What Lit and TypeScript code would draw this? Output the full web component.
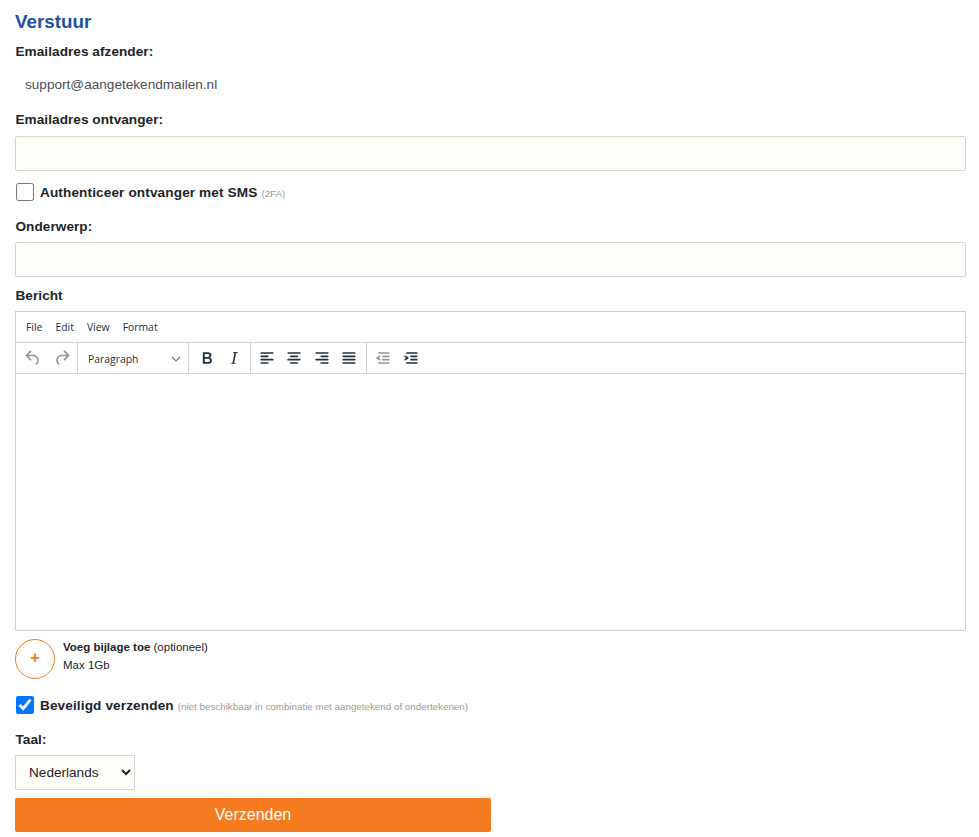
import { LitElement, html, css } from "lit";
import { customElement } from "lit/decorators.js";

const ic = (d: string, cls = "") => html`<svg class="ic ${cls}" viewBox="0 0 24 24" width="24" height="24"><path d=${d}></path></svg>`;
const P = {
  undo: "M6.4 8H12c3.7 0 6.2 2 6.8 5.1.6 2.7-.4 5.6-2.3 6.8a1 1 0 0 1-1-1.8c1.1-.6 1.8-2.7 1.4-4.6-.5-2.1-2.1-3.5-4.9-3.5H6.4l3.3 3.3a1 1 0 1 1-1.4 1.4l-5-5a1 1 0 0 1 0-1.4l5-5a1 1 0 0 1 1.4 1.4L6.4 8Z",
  redo: "M17.6 10H12c-2.8 0-4.4 1.4-4.9 3.5-.4 2 .3 4 1.4 4.6a1 1 0 1 1-1 1.8c-2-1.2-2.9-4.1-2.3-6.8.6-3 3-5.1 6.8-5.1h5.6l-3.3-3.3a1 1 0 1 1 1.4-1.4l5 5a1 1 0 0 1 0 1.4l-5 5a1 1 0 0 1-1.4-1.4l3.3-3.3Z",
  bold: "M7.8 19c-.3 0-.5 0-.6-.2l-.2-.5V5.7c0-.2 0-.4.2-.5l.6-.2h5c1.5 0 2.7.3 3.5 1 .7.6 1.1 1.4 1.1 2.5a3 3 0 0 1-.6 1.9c-.4.6-1 1-1.6 1.2.4.1.9.3 1.3.6s.8.7 1 1.2c.3.4.4 1 .4 1.6 0 1.3-.4 2.3-1.3 3-.8.7-2.1 1-3.8 1H7.8Zm5-8.3c.6 0 1.2-.1 1.6-.5.4-.3.6-.7.6-1.3 0-1.1-.8-1.7-2.3-1.7H9.3v3.5h3.4Zm.5 6c.7 0 1.3-.1 1.7-.4.4-.4.6-.9.6-1.5s-.2-1-.7-1.4c-.4-.3-1-.4-2-.4H9.4v3.8h4Z",
  italic: "M16.7 4.7l-.1.9h-.3c-.6 0-1 0-1.4.3-.3.3-.4.6-.5 1.1l-2.1 9.8v.6c0 .5.4.8 1.4.8h.2l-.2.8H8l.2-.8h.2c1.1 0 1.8-.5 2-1.5l2-9.8.1-.5c0-.6-.4-.8-1.4-.8h-.3l.2-.9h5.8Z",
  left: "M5 5h14c.6 0 1 .4 1 1s-.4 1-1 1H5a1 1 0 1 1 0-2Zm0 4h8c.6 0 1 .4 1 1s-.4 1-1 1H5a1 1 0 1 1 0-2Zm0 8h8c.6 0 1 .4 1 1s-.4 1-1 1H5a1 1 0 0 1 0-2Zm0-4h14c.6 0 1 .4 1 1s-.4 1-1 1H5a1 1 0 0 1 0-2Z",
  center: "M5 5h14c.6 0 1 .4 1 1s-.4 1-1 1H5a1 1 0 1 1 0-2Zm3 4h8c.6 0 1 .4 1 1s-.4 1-1 1H8a1 1 0 1 1 0-2Zm0 8h8c.6 0 1 .4 1 1s-.4 1-1 1H8a1 1 0 0 1 0-2Zm-3-4h14c.6 0 1 .4 1 1s-.4 1-1 1H5a1 1 0 0 1 0-2Z",
  right: "M5 5h14c.6 0 1 .4 1 1s-.4 1-1 1H5a1 1 0 1 1 0-2Zm6 4h8c.6 0 1 .4 1 1s-.4 1-1 1h-8a1 1 0 0 1 0-2Zm0 8h8c.6 0 1 .4 1 1s-.4 1-1 1h-8a1 1 0 0 1 0-2Zm-6-4h14c.6 0 1 .4 1 1s-.4 1-1 1H5a1 1 0 0 1 0-2Z",
  justify: "M5 5h14c.6 0 1 .4 1 1s-.4 1-1 1H5a1 1 0 1 1 0-2Zm0 4h14c.6 0 1 .4 1 1s-.4 1-1 1H5a1 1 0 1 1 0-2Zm0 4h14c.6 0 1 .4 1 1s-.4 1-1 1H5a1 1 0 0 1 0-2Zm0 4h14c.6 0 1 .4 1 1s-.4 1-1 1H5a1 1 0 0 1 0-2Z",
  outdent: "M7 5h12c.6 0 1 .4 1 1s-.4 1-1 1H7a1 1 0 1 1 0-2Zm5 4h7c.6 0 1 .4 1 1s-.4 1-1 1h-7a1 1 0 0 1 0-2Zm0 4h7c.6 0 1 .4 1 1s-.4 1-1 1h-7a1 1 0 0 1 0-2Zm-5 4h12a1 1 0 0 1 0 2H7a1 1 0 0 1 0-2Zm1.6-3.8a1 1 0 0 1-1.2 1.6l-3-2a1 1 0 0 1 0-1.6l3-2a1 1 0 0 1 1.2 1.6L6.8 12l1.8 1.2Z",
  indent: "M7 5h12c.6 0 1 .4 1 1s-.4 1-1 1H7a1 1 0 1 1 0-2Zm5 4h7c.6 0 1 .4 1 1s-.4 1-1 1h-7a1 1 0 0 1 0-2Zm0 4h7c.6 0 1 .4 1 1s-.4 1-1 1h-7a1 1 0 0 1 0-2Zm-5 4h12a1 1 0 0 1 0 2H7a1 1 0 0 1 0-2Zm-2.6-3.8L6.2 12l-1.8-1.2a1 1 0 0 1 1.2-1.6l3 2a1 1 0 0 1 0 1.6l-3 2a1 1 0 1 1-1.2-1.6Z",
};

@customElement("app-root")
export class AppRoot extends LitElement {
  static styles = css`
    :host { display: block; font-family: "Liberation Sans", Arial, sans-serif; color: #212529; background: #fff; height: 837px; overflow: hidden; }
    .page { display: flex; flex-direction: column; padding: 11px 13px 0 15px; }
    h2 { margin: 0; font-size: 18.8px; line-height: 22px; font-weight: 700; color: #21509f; }
    .lbl { font-size: 13.6px; line-height: 20px; font-weight: 700; color: #212529; letter-spacing: 0.05px; padding-left: 0.5px; }
    .lbl1 { margin-top: 9px; }
    .sender { font-size: 13.6px; line-height: 20px; color: #495057; padding-left: 10px; margin-top: 13px; }
    .lbl2 { margin-top: 15px; }
    .field { display: block; box-sizing: border-box; width: 100%; height: 35px; margin: 6px 0 0; background: #fffdf8; border: 1px solid #d4d4d4; border-radius: 2px; outline: none; padding: 0; }
    .field.f2 { margin-top: 5px; }
    .check { display: flex; align-items: center; height: 20px; }
    .check input { width: 18px; height: 18px; margin: 0 6px 0 1px; flex: none; }
    .check b { font-size: 13.6px; font-weight: 700; letter-spacing: 0.12px; color: #212529; white-space: nowrap; }
    .check small { font-size: 9.8px; color: #9a9a9a; margin-left: 4px; white-space: nowrap; padding-top: 3px; }
    .c1 { margin-top: 11px; }
    .lbl3 { margin-top: 15px; }
    .lbl4 { margin-top: 9px; }
    .editor { box-sizing: border-box; height: 320px; margin-top: 5px; border: 1px solid #cfcfcf; display: flex; flex-direction: column; font-family: "Open Sans", sans-serif; font-size: 10.4px; color: #222f3e; }
    .menu { height: 30px; display: flex; align-items: center; gap: 13px; padding-left: 10px; border-bottom: 1px solid #cfcfcf; }
    .bar { height: 30px; display: flex; border-bottom: 1px solid #cfcfcf; align-items: stretch; }
    .grp { display: flex; align-items: center; border-right: 1px solid #cfcfcf; flex: none; box-sizing: border-box; }
    .grp.hist { padding-left: 5px; gap: 5px; width: 62px; }
    .grp.fmt { padding-left: 6px; gap: 3px; width: 62px; }
    .grp.align { padding-left: 4px; gap: 3.3px; width: 116px; }
    .grp.last { border-right: 0; padding-left: 4px; gap: 4px; }
    .btn { width: 24px; height: 24px; display: flex; align-items: center; justify-content: center; flex: none; }
    .ic { width: 20px; height: 20px; fill: #222f3e; display: block; }
    .ic.dim { opacity: .5; }
    .para { width: 111px; flex: none; box-sizing: border-box; padding: 1px 4px 0 10px; border-right: 1px solid #cfcfcf; display: flex; align-items: center; justify-content: space-between; }
    .chev { width: 10px; height: 6px; margin-right: 3px; fill: none; stroke: #222f3e; stroke-width: 1.2; opacity: .6; }
    .area { flex: 1; }
    .attach { display: flex; gap: 8px; margin-top: 8px; height: 40px; }
    .circle { box-sizing: border-box; width: 40px; height: 40px; padding-bottom: 2px; border: 1px solid #f47b20; border-radius: 50%; display: flex; align-items: center; justify-content: center; color: #f47b20; font-size: 16px; font-weight: 700; line-height: 1; }
    .att-text { font-size: 11.5px; line-height: 18px; color: #212529; margin-top: -1px; }
    .att-text b { font-weight: 700; }
    .c2 { margin-top: 16px; }
    .lbl5 { margin-top: 15px; }
    select { display: block; box-sizing: border-box; width: 120px; height: 35px; margin-top: 5px; background: #fffdf8; border: 1px solid #d4d4d4; border-radius: 0; font-family: "Liberation Sans", Arial, sans-serif; font-size: 13.6px; color: #212529; padding: 0 0 0 9px; outline: none; }
    .send { box-sizing: border-box; width: 476px; height: 34px; margin-top: 8px; background: #f47b20; color: #fff; border: 0; border-radius: 2px; font-family: "Liberation Sans", Arial, sans-serif; font-size: 16px; padding: 0; }
  `;

  render() {
    return html`<div class="page">
      <h2>Verstuur</h2>
      <div class="lbl lbl1">Emailadres afzender:</div>
      <div class="sender">support@aangetekendmailen.nl</div>
      <div class="lbl lbl2">Emailadres ontvanger:</div>
      <input class="field" type="text" />
      <label class="check c1"><input type="checkbox" /><b>Authenticeer ontvanger met SMS</b><small>(2FA)</small></label>
      <div class="lbl lbl3">Onderwerp:</div>
      <input class="field f2" type="text" />
      <div class="lbl lbl4">Bericht</div>
      <div class="editor">
        <div class="menu"><span>File</span><span>Edit</span><span>View</span><span>Format</span></div>
        <div class="bar">
          <div class="grp hist"><span class="btn">${ic(P.undo, "dim")}</span><span class="btn">${ic(P.redo, "dim")}</span></div>
          <div class="para"><span>Paragraph</span><svg class="chev" viewBox="0 0 10 6"><path d="M1 1l4 4 4-4"></path></svg></div>
          <div class="grp fmt"><span class="btn">${ic(P.bold)}</span><span class="btn">${ic(P.italic)}</span></div>
          <div class="grp align"><span class="btn">${ic(P.left)}</span><span class="btn">${ic(P.center)}</span><span class="btn">${ic(P.right)}</span><span class="btn">${ic(P.justify)}</span></div>
          <div class="grp last"><span class="btn">${ic(P.outdent, "dim")}</span><span class="btn">${ic(P.indent)}</span></div>
        </div>
        <div class="area"></div>
      </div>
      <div class="attach">
        <div class="circle">+</div>
        <div class="att-text"><div><b>Voeg bijlage toe</b> (optioneel)</div><div>Max 1Gb</div></div>
      </div>
      <label class="check c2"><input type="checkbox" checked /><b>Beveiligd verzenden</b><small>(niet beschikbaar in combinatie met aangetekend of ondertekenen)</small></label>
      <div class="lbl lbl5">Taal:</div>
      <select><option>Nederlands</option></select>
      <button class="send">Verzenden</button>
    </div>`;
  }
}
